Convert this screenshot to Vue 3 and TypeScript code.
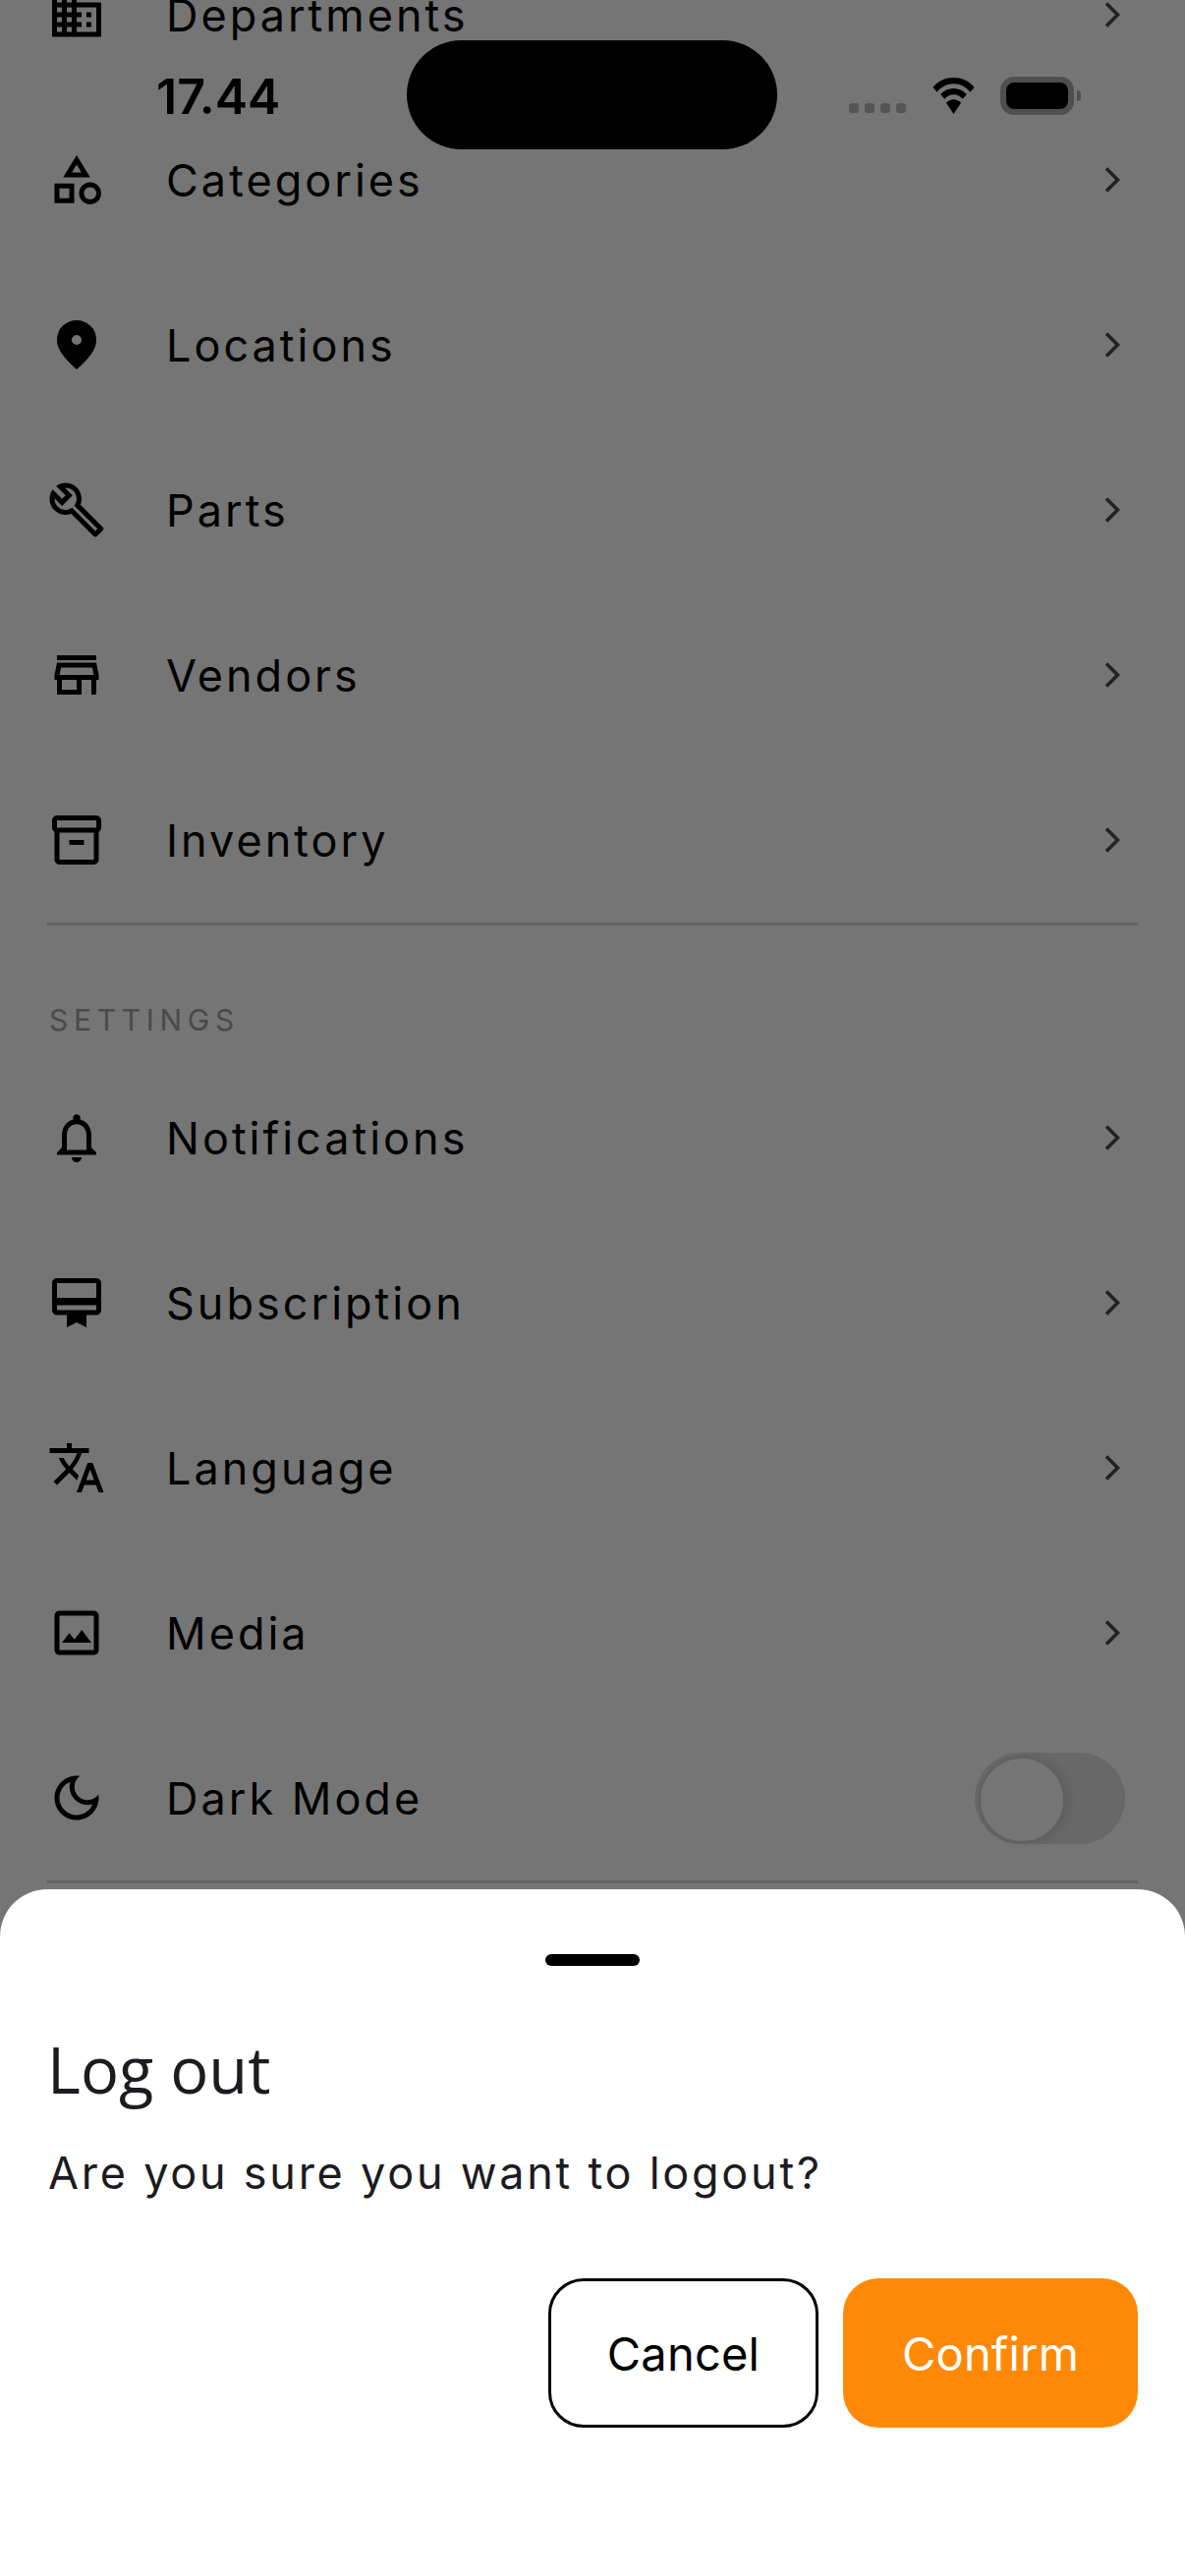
<script setup lang="ts">
interface Row { label: string; d: string }
const inv = "M20 2H4c-1 0-2 .9-2 2v3.01c0 .72.43 1.34 1 1.69V20c0 1.1 1.1 2 2 2h14c.9 0 2-.9 2-2V8.7c.57-.35 1-.97 1-1.69V4c0-1.1-1-2-2-2zm-1 18H5V9h14v11zm1-13H4V4h16v3zM9 12h6v2H9z"
const general: Row[] = [
  { label: 'Departments', d: 'M12 7V3H2v18h20V7H12zM6 19H4v-2h2v2zm0-4H4v-2h2v2zm0-4H4V9h2v2zm0-4H4V5h2v2zm4 12H8v-2h2v2zm0-4H8v-2h2v2zm0-4H8V9h2v2zm0-4H8V5h2v2zm10 12h-8v-2h2v-2h-2v-2h2v-2h-2V9h8v10zm-2-8h-2v2h2v-2zm0 4h-2v2h2v-2z' },
  { label: 'Categories', d: 'M12 2l-5.5 9h11L12 2zm0 3.84L13.93 9h-3.87L12 5.84zM17.5 13c-2.49 0-4.5 2.01-4.5 4.5s2.01 4.5 4.5 4.5 4.5-2.01 4.5-4.5-2.01-4.5-4.5-4.5zm0 7c-1.38 0-2.5-1.12-2.5-2.5s1.12-2.5 2.5-2.5 2.5 1.12 2.5 2.5-1.12 2.5-2.5 2.5zM3 21.5h8v-8H3v8zm2-6h4v4H5v-4z' },
  { label: 'Locations', d: 'M12 12q.825 0 1.413-.587T14 10t-.587-1.412T12 8t-1.412.588T10 10t.588 1.413T12 12m0 10q-4.025-3.425-6.012-6.362T4 10.2q0-3.75 2.413-5.975T12 2t5.588 2.225T20 10.2q0 2.5-1.987 5.438T12 22' },
  { label: 'Parts', d: 'M22.61 18.99l-9.08-9.08c.93-2.34.45-5.1-1.44-7C9.79.61 6.21.4 3.66 2.26L7.5 6.11 6.08 7.52 2.25 3.69C.39 6.23.6 9.82 2.9 12.11c1.86 1.86 4.57 2.35 6.89 1.48l9.11 9.11c.39.39 1.02.39 1.41 0l2.3-2.3c.4-.38.4-1.02 0-1.41zm-3 1.6l-9.46-9.46c-.61.45-1.29.72-2 .82-1.36.2-2.79-.21-3.83-1.25C3.37 9.76 2.93 8.5 3 7.26l3.09 3.09 4.24-4.24-3.09-3.09c1.24-.07 2.49.37 3.44 1.31 1.08 1.08 1.49 2.57 1.24 3.96-.12.71-.42 1.37-.88 1.96l9.45 9.45-.88.88z' },
  { label: 'Vendors', d: 'M18.36 9l.6 3H5.04l.6-3h12.72M20 4H4v2h16V4zm0 3H4l-1 5v2h1v6h10v-6h4v6h2v-6h1v-2l-1-5zM6 18v-4h6v4H6z' },
  { label: 'Inventory', d: inv }
]
const settings: Row[] = [
  { label: 'Notifications', d: 'M12 22c1.1 0 2-.9 2-2h-4c0 1.1.9 2 2 2zm6-6v-5c0-3.07-1.63-5.64-4.5-6.32V4c0-.83-.67-1.5-1.5-1.5s-1.5.67-1.5 1.5v.68C7.64 5.36 6 7.92 6 11v5l-2 2v1h16v-1l-2-2zm-2 1H8v-6c0-2.48 1.51-4.5 4-4.5s4 2.02 4 4.5v6z' },
  { label: 'Subscription', d: 'M20 2H4c-1.11 0-2 .89-2 2v11c0 1.11.89 2 2 2h4v5l4-2 4 2v-5h4c1.11 0 2-.89 2-2V4c0-1.11-.89-2-2-2zm0 13H4v-2h16v2zm0-5H4V4h16v6z' },
  { label: 'Language', d: 'M12.87 15.07l-2.54-2.51.03-.03c1.74-1.94 2.98-4.17 3.71-6.53H17V4h-7V2H8v2H1v1.99h11.17C11.5 7.92 10.44 9.75 9 11.35 8.07 10.32 7.3 9.19 6.69 8h-2c.73 1.63 1.73 3.17 2.98 4.56l-5.09 5.02L4 19l5-5 3.11 3.11.76-2.04zM18.5 10h-2L12 22h2l1.12-3h4.75L21 22h2l-4.5-12zm-2.62 7l1.62-4.33L19.12 17h-3.24z' },
  { label: 'Media', d: 'M19 5v14H5V5h14m0-2H5c-1.1 0-2 .9-2 2v14c0 1.1.9 2 2 2h14c1.1 0 2-.9 2-2V5c0-1.1-.9-2-2-2zM6 16l3-3.9 2.1 2.6 3-3.9L18 16z' }
]
const moon = 'M9.37 5.51c-.18.64-.27 1.31-.27 1.99 0 4.08 3.32 7.4 7.4 7.4.68 0 1.35-.09 1.99-.27C17.45 17.19 14.93 19 12 19c-3.86 0-7-3.14-7-7 0-2.93 1.81-5.45 4.37-6.49zM12 3c-4.97 0-9 4.03-9 9s4.03 9 9 9 9-4.03 9-9c0-.46-.04-.92-.1-1.36-.98 1.37-2.58 2.26-4.4 2.26-2.98 0-5.4-2.42-5.4-5.4 0-1.81.89-3.42 2.26-4.4-.44-.06-.9-.1-1.36-.1z'
</script>

<template>
  <div class="screen">
    <main class="list">
      <div v-for="r in general" :key="r.label" class="row">
        <svg class="icon" viewBox="0 0 24 24"><path :d="r.d" fill-rule="evenodd" /></svg>
        <span class="label">{{ r.label }}</span>
        <svg class="chev" viewBox="0 0 16 26"><path d="M2 1.500 13.500 13 2 24.500" /></svg>
      </div>
      <div class="rule"></div>
      <div class="section">SETTINGS</div>
      <div v-for="r in settings" :key="r.label" class="row">
        <svg class="icon" viewBox="0 0 24 24"><path :d="r.d" fill-rule="evenodd" /></svg>
        <span class="label">{{ r.label }}</span>
        <svg class="chev" viewBox="0 0 16 26"><path d="M2 1.500 13.500 13 2 24.500" /></svg>
      </div>
      <div class="row">
        <svg class="icon" viewBox="0 0 24 24"><path :d="moon" fill-rule="evenodd" /></svg>
        <span class="label">Dark Mode</span>
        <div class="toggle"><div class="knob"></div></div>
      </div>
      <div class="rule"></div>
    </main>

    <div class="scrim"></div>

    <div class="status">
      <span class="time">17.44</span>
      <div class="island"></div>
      <div class="signal"><i></i><i></i><i></i><i></i></div>
      <svg class="wifi" viewBox="0 0 51 44">
        <path d="M25.500 0C15.800 0 7 3.700.4 11.800l5 5.600C10.600 11 17.500 7.400 25.500 7.400s14.900 3.600 20.100 10l5-5.600C44 3.700 35.200 0 25.500 0z" />
        <path d="M25.500 13c-6.200 0-11.800 2.600-15.900 7.200l5 5.600c2.900-3.300 6.600-5.200 10.900-5.200s8 1.900 10.900 5.200l5-5.600C37.300 15.600 31.700 13 25.500 13z" />
        <path d="M25.500 26.500c-3.500 0-6.600 1.500-9 4.200L25.500 44l9-13.300c-2.400-2.700-5.500-4.200-9-4.200z" />
      </svg>
      <div class="battery"><div class="cell"></div></div>
      <div class="nub"></div>
    </div>

    <section class="sheet">
      <div class="handle"></div>
      <h2 class="title">Log out</h2>
      <p class="body">Are you sure you want to logout?</p>
      <div class="actions">
        <button class="btn cancel">Cancel</button>
        <button class="btn confirm">Confirm</button>
      </div>
    </section>
  </div>
</template>

<style>
html, body { margin: 0; padding: 0; background: #fff; }
</style>

<style scoped>
.screen {
  position: relative;
  width: 1206px;
  height: 2622px;
  overflow: hidden;
  background: #fff;
  font-family: Inter, "Liberation Sans", sans-serif;
}
.list {
  display: flex;
  flex-direction: column;
  margin-top: -69px;
  padding: 0 48px;
}
.row {
  display: flex;
  align-items: center;
  flex: none;
  height: 168px;
  color: #000;
}
.icon {
  flex: none;
  width: 60px;
  height: 60px;
  fill: #000;
}
.label {
  flex: 1;
  margin-left: 61px;
  font-size: 45px;
  letter-spacing: 3px;
  font-weight: 400;
}
.chev {
  flex: none;
  width: 16px;
  height: 26px;
  margin-right: 18px;
  fill: none;
  stroke: #4a4a4a;
  stroke-width: 3.6;
}
.rule {
  flex: none;
  height: 3px;
  background: #d6d6d6;
}
.section {
  flex: none;
  margin-top: 78px;
  height: 54px;
  line-height: 36px;
  margin-left: 2px;
  font-size: 30px;
  letter-spacing: 5.7px;
  color: #a2a2a2;
}
.toggle {
  flex: none;
  position: relative;
  width: 153px;
  height: 93px;
  margin-right: 13px;
  border-radius: 47px;
  background: #e2e2e2;
}
.knob {
  position: absolute;
  top: 3px;
  left: 3px;
  width: 84px;
  height: 84px;
  border-radius: 50%;
  border: 3px solid #d4d4d4;
  background: #fff;
  box-shadow: 4px 0 10px rgba(0, 0, 0, 0.08);
}
.scrim {
  position: absolute;
  inset: 0;
  background: rgba(0, 0, 0, 0.54);
}
.status {
  position: absolute;
  inset: 0 0 auto 0;
  height: 160px;
}
.time {
  position: absolute;
  left: 159px;
  top: 69px;
  line-height: 58px;
  font-size: 50px;
  font-weight: 600;
  color: #000;
}
.island {
  position: absolute;
  left: 414px;
  top: 41px;
  width: 377px;
  height: 111px;
  border-radius: 56px;
  background: #000;
}
.signal {
  position: absolute;
  left: 864px;
  top: 105px;
  display: flex;
  gap: 6px;
}
.signal i {
  display: block;
  width: 10px;
  height: 10px;
  border-radius: 3px;
  background: #555;
}
.wifi {
  position: absolute;
  left: 945px;
  top: 79px;
  width: 51px;
  height: 37px;
  fill: #000;
}
.battery {
  position: absolute;
  left: 1018px;
  top: 78px;
  width: 75px;
  height: 39px;
  box-sizing: border-box;
  border: 6px solid #4f4f4f;
  border-radius: 14px;
  display: flex;
}
.cell {
  flex: 1;
  border-radius: 8px;
  background: #000;
}
.nub {
  position: absolute;
  left: 1096px;
  top: 92px;
  width: 4px;
  height: 11px;
  border-radius: 0 5px 5px 0;
  background: #4f4f4f;
}
.sheet {
  position: absolute;
  left: 0;
  right: 0;
  bottom: 0;
  height: 699px;
  box-sizing: border-box;
  padding: 66px 48px 0;
  display: flex;
  flex-direction: column;
  background: #fff;
  border-radius: 48px 48px 0 0;
}
.handle {
  flex: none;
  align-self: center;
  width: 96px;
  height: 12px;
  border-radius: 6px;
  background: #000;
}
.title {
  margin: 65px 0 0;
  font-family: "Open Sans", sans-serif;
  font-size: 65px;
  line-height: 80px;
  font-weight: 400;
  color: #1c1b1f;
}
.body {
  margin: 36px 0 0 1px;
  font-size: 45px;
  line-height: 60px;
  letter-spacing: 2.75px;
  font-weight: 400;
  color: #1c1b1f;
}
.actions {
  display: flex;
  justify-content: flex-end;
  gap: 25px;
  margin-top: 77px;
}
.btn {
  box-sizing: border-box;
  height: 152px;
  padding: 0;
  border-radius: 36px;
  font-family: Inter, sans-serif;
  font-size: 47px;
  letter-spacing: 0.2px;
  font-weight: 400;
}
.cancel {
  width: 275px;
  border: 3px solid #000;
  background: #fff;
  color: #000;
}
.confirm {
  width: 300px;
  border: 0;
  background: #ff8906;
  color: #fff;
}
</style>
